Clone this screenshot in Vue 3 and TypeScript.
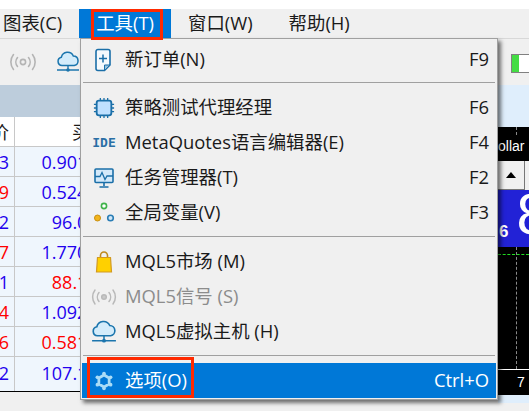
<template>
  <div class="page">
    <div class="top-strip"></div>

    <!-- Menu bar -->
    <div class="menubar">
      <span v-for="m in menus" :key="m" class="menubar-item" :class="{ active: m === '工具(T)' }">{{ m }}</span>
    </div>

    <!-- Toolbar -->
    <div class="toolbar">
      <svg class="tool-signal" width="28" height="20" viewBox="0 0 28 20">
        <g fill="none" stroke="#b4b4b4" stroke-width="1.6" stroke-linecap="round">
          <circle cx="14" cy="10" r="2.6" />
          <path d="M8.5 5.5a7 7 0 0 0 0 9M19.5 5.5a7 7 0 0 1 0 9" />
          <path d="M4.5 2.5a12 12 0 0 0 0 15M23.5 2.5a12 12 0 0 1 0 15" />
        </g>
      </svg>
      <svg class="tool-cloud" width="24" height="24" viewBox="0 0 24 24">
        <path d="M6 15.5a4.2 4.2 0 0 1-.6-8.3A6.3 6.3 0 0 1 17.3 6a4.8 4.8 0 0 1 .9 9.5z" fill="#d3ecfb" stroke="#1b75ad" stroke-width="1.5" />
        <path d="M1 20h22M12 15.5V20" stroke="#1b75ad" stroke-width="1.4" fill="none" />
        <circle cx="12" cy="20" r="1.8" fill="#1b75ad" />
      </svg>
    </div>

    <div class="content">
      <!-- Quotes table -->
      <div class="quotes">
        <div class="quotes-title"></div>
        <div class="quotes-row head">
          <div class="cell-a">价</div>
          <div class="cell-b center">买价</div>
        </div>
        <div v-for="(q, i) in quotes" :key="i" class="quotes-row">
          <div class="cell-a" :class="q.aUp ? 'blue' : 'red'">{{ q.a }}</div>
          <div class="cell-b" :class="q.bUp ? 'blue' : 'red'">{{ q.b }}</div>
        </div>
        <div class="quotes-foot"></div>
      </div>

      <!-- Chart edge -->
      <div class="chart">
        <div class="chart-title"></div>
        <div class="chart-head">ollar<span class="grid-line head-line"></span></div>
        <div class="chart-btn"><span class="arrow"></span></div>
        <div class="chart-price"><span class="small">6</span><span class="big">8</span></div>
        <div class="chart-body">
          <span class="grid-line body-line"></span>
          <div class="green-line"></div>
          <div class="axis-line"></div>
          <div class="axis-label">7</div>
        </div>
        <div class="chart-foot"></div>
      </div>
    </div>

    <div class="progress"><span class="progress-fill"></span></div>

    <!-- Dropdown -->
    <div class="menu">
      <template v-for="(item, i) in items" :key="i">
        <div v-if="item.sep" class="sep"></div>
        <div v-else class="row" :class="{ disabled: item.disabled, selected: item.selected }">
          <span class="row-icon">
            <svg v-if="item.icon === 'order'" width="24" height="26" viewBox="0 0 24 26">
              <path d="M6 2.5h10a2 2 0 0 1 2 2V18l-5.5 5.5H6a2 2 0 0 1-2-2v-17a2 2 0 0 1 2-2z" fill="#f6fafd" stroke="#1b6fa8" stroke-width="1.6" />
              <path d="M18 18h-5.5v5.5z" fill="#9cc4de" stroke="#1b6fa8" stroke-width="1" />
              <path d="M11 7.5v8M7 11.5h8" stroke="#1b6fa8" stroke-width="1.5" />
            </svg>
            <svg v-else-if="item.icon === 'chip'" width="22" height="22" viewBox="0 0 24 24">
              <path d="M8 1v22M12 1v22M16 1v22M1 8h22M1 12h22M1 16h22" stroke="#1b6fa8" stroke-width="1.4" />
              <rect x="4" y="4" width="16" height="16" rx="2.5" fill="#bfe0ff" stroke="#1b6fa8" stroke-width="2" />
            </svg>
            <span v-else-if="item.icon === 'ide'" class="ide">IDE</span>
            <svg v-else-if="item.icon === 'monitor'" width="24" height="24" viewBox="0 0 24 24">
              <rect x="3" y="3" width="18" height="13.5" rx="1" fill="#d3e9fa" stroke="#1b6fa8" stroke-width="1.6" />
              <path d="M3 10.5h5l2-4 3 7 2-3.5h6" fill="none" stroke="#1b6fa8" stroke-width="1.3" />
              <path d="M12 16.5V20M7.5 21h9" stroke="#1b6fa8" stroke-width="1.6" />
            </svg>
            <svg v-else-if="item.icon === 'vars'" width="24" height="24" viewBox="0 0 24 24">
              <circle cx="12" cy="5" r="2.6" fill="#fff" stroke="#3fb34a" stroke-width="1.6" />
              <circle cx="5.5" cy="17" r="3" fill="#f2b41b" stroke="#c98f10" stroke-width="1" />
              <circle cx="18.500" cy="17" r="2.8" fill="#cfe6f7" stroke="#2a7db5" stroke-width="1.6" />
            </svg>
            <svg v-else-if="item.icon === 'market'" width="24" height="24" viewBox="0 0 24 24">
              <path d="M8.5 9V5.5a3.5 3.5 0 0 1 7 0V9" fill="none" stroke="#c08a1e" stroke-width="1.6" />
              <path d="M5.5 7.5h13l1 14.5h-15z" fill="#ffd000" stroke="#d29a22" stroke-width="1.2" />
            </svg>
            <svg v-else-if="item.icon === 'signal'" width="28" height="20" viewBox="0 0 28 20">
              <g fill="none" stroke="#b9b9b9" stroke-width="1.5" stroke-linecap="round">
                <circle cx="14" cy="10" r="2.3" fill="#c9c9c9" />
                <path d="M9 5.5a7 7 0 0 0 0 9M19 5.5a7 7 0 0 1 0 9" />
                <path d="M5 3a11.5 11.5 0 0 0 0 14M23 3a11.5 11.5 0 0 1 0 14" />
              </g>
            </svg>
            <svg v-else-if="item.icon === 'cloud'" width="26" height="26" viewBox="0 0 24 24">
              <path d="M6 15.5a4.2 4.2 0 0 1-.6-8.3A6.3 6.3 0 0 1 17.3 6a4.8 4.8 0 0 1 .9 9.5z" fill="#d3ecfb" stroke="#1b75ad" stroke-width="1.5" />
              <path d="M1 20h22M12 15.5V20" stroke="#1b75ad" stroke-width="1.4" fill="none" />
              <circle cx="12" cy="20" r="1.8" fill="#1b75ad" />
            </svg>
            <svg v-else-if="item.icon === 'gear'" width="22" height="22" viewBox="0 0 24 24">
              <path d="M12 5.5l5.6 3.25v6.5L12 18.5l-5.6-3.25v-6.5z" fill="none" stroke="#a9dcf7" stroke-width="3" stroke-linejoin="round" />
              <circle cx="12" cy="3.8" r="2" fill="#a9dcf7" />
              <circle cx="12" cy="20.2" r="2" fill="#a9dcf7" />
              <circle cx="4.8" cy="8" r="2" fill="#a9dcf7" />
              <circle cx="19.2" cy="8" r="2" fill="#a9dcf7" />
              <circle cx="4.8" cy="16" r="2" fill="#a9dcf7" />
              <circle cx="19.2" cy="16" r="2" fill="#a9dcf7" />
            </svg>
          </span>
          <span class="row-label">{{ item.label }}</span>
          <span class="row-key">{{ item.key }}</span>
        </div>
      </template>
    </div>

    <!-- Red annotation boxes -->
    <div class="mark mark-tools"></div>
    <div class="mark mark-options"></div>
  </div>
</template>

<script setup lang="ts">
interface MenuItem {
  sep?: boolean
  icon?: string
  label?: string
  key?: string
  disabled?: boolean
  selected?: boolean
}

const menus = ['图表(C)', '工具(T)', '窗口(W)', '帮助(H)']

const quotes = [
  { a: '3', aUp: true, b: '0.90123', bUp: true },
  { a: '9', aUp: false, b: '0.52412', bUp: true },
  { a: '2', aUp: true, b: '96.012', bUp: true },
  { a: '7', aUp: false, b: '1.77012', bUp: true },
  { a: '1', aUp: true, b: '88.123', bUp: false },
  { a: '4', aUp: false, b: '1.09212', bUp: true },
  { a: '6', aUp: false, b: '0.58123', bUp: false },
  { a: '2', aUp: true, b: '107.123', bUp: true },
]

const items: MenuItem[] = [
  { icon: 'order', label: '新订单(N)', key: 'F9' },
  { sep: true },
  { icon: 'chip', label: '策略测试代理经理', key: 'F6' },
  { icon: 'ide', label: 'MetaQuotes语言编辑器(E)', key: 'F4' },
  { icon: 'monitor', label: '任务管理器(T)', key: 'F2' },
  { icon: 'vars', label: '全局变量(V)', key: 'F3' },
  { sep: true },
  { icon: 'market', label: 'MQL5市场 (M)' },
  { icon: 'signal', label: 'MQL5信号 (S)', disabled: true },
  { icon: 'cloud', label: 'MQL5虚拟主机 (H)' },
  { sep: true },
  { icon: 'gear', label: '选项(O)', key: 'Ctrl+O', selected: true },
]
</script>

<style>
html,
body {
  margin: 0;
  background: #f0f0f0;
}
</style>

<style scoped>
.page {
  position: relative;
  width: 529px;
  height: 411px;
  overflow: hidden;
  display: flex;
  flex-direction: column;
  background: #f0f0f0;
  color: #1a1a1a;
  font-family: "Open Sans", "Noto Sans CJK SC", sans-serif;
  font-size: 18.4px;
}

.top-strip {
  height: 9px;
  background: #fff;
  flex: none;
}

.menubar {
  height: 29px;
  flex: none;
  display: flex;
  margin-left: -14px;
  border-bottom: 1px solid #d8d8d8;
}

.menubar-item {
  padding: 0 17px;
  line-height: 27px;
  white-space: nowrap;
}

.menubar-item:last-child {
  margin-left: 2px;
}

.menubar-item.active {
  background: #0078d7;
  color: #fff;
}

.toolbar {
  height: 46px;
  flex: none;
  display: flex;
  align-items: center;
  padding-left: 9px;
  gap: 19px;
}

.content {
  flex: 1;
  display: flex;
  min-height: 0;
}

.quotes {
  width: 498px;
  flex: none;
  display: flex;
  flex-direction: column;
}

.quotes-title {
  height: 32px;
  flex: none;
  background: #bdcddc;
}

.quotes-row {
  height: 29px;
  flex: none;
  display: flex;
  background: #eff6fd;
  border-bottom: 1px solid #c8c8c8;
  font-size: 18px;
  line-height: 30px;
}

.quotes-row.head {
  background: #fff;
  color: #1a1a1a;
}

.quotes-row:nth-last-child(2) {
  height: 34px;
  line-height: 33px;
  border-bottom: 1px solid #000;
}

.cell-a {
  width: 15px;
  flex: none;
  box-sizing: border-box;
  padding-right: 5px;
  border-right: 1px solid #c8c8c8;
  display: flex;
  justify-content: flex-end;
  white-space: nowrap;
  overflow: hidden;
}

.cell-b {
  width: 93px;
  flex: none;
  text-align: right;
  white-space: nowrap;
}

.cell-b.center {
  width: 150px;
  text-align: center;
}

.blue {
  color: #2200ee;
}

.red {
  color: #f00;
}

.quotes-foot {
  flex: 1;
}

.chart {
  flex: 1;
  display: flex;
  flex-direction: column;
  min-width: 0;
}

.chart-title {
  height: 42px;
  flex: none;
  background: #dfeefc;
}

.chart-head {
  height: 34px;
  flex: none;
  position: relative;
  background: #000;
  color: #fff;
  font-family: "Liberation Sans", sans-serif;
  font-size: 14px;
  line-height: 38px;
  overflow: hidden;
}

.grid-line {
  position: absolute;
  left: 18px;
  border-left: 1px dashed #8a8a8a;
}

.head-line {
  top: 0;
  height: 8px;
}

.body-line {
  top: 0;
  height: 122px;
}

.chart-btn {
  height: 29px;
  width: 27px;
  flex: none;
  box-sizing: border-box;
  background: #f0f0f0;
  border-right: 1px solid #777;
  border-bottom: 1px solid #777;
  display: flex;
  align-items: center;
  justify-content: center;
}

.arrow {
  width: 0;
  height: 0;
  border-left: 5px solid transparent;
  border-right: 5px solid transparent;
  border-bottom: 6px solid #000;
}

.chart-price {
  height: 57px;
  flex: none;
  background: #2222d6;
  color: #fff;
  font-family: "Liberation Sans", sans-serif;
  display: flex;
  align-items: flex-end;
  overflow: hidden;
  padding-left: 1px;
}

.small {
  flex: none;
  font-size: 17px;
  font-weight: 700;
  line-height: 17px;
  margin-bottom: 7px;
}

.big {
  flex: none;
  font-size: 58px;
  line-height: 58px;
  margin-left: 8px;
  margin-bottom: 4px;
}

.chart-body {
  flex: none;
  height: 148px;
  background: #000;
  color: #fff;
  position: relative;
  font-family: "Liberation Sans", sans-serif;
}

.green-line {
  border-top: 1px dashed #22e022;
  margin-top: 7px;
}

.axis-line {
  border-top: 1px solid #fff;
  margin-top: 114px;
}

.axis-label {
  font-size: 14px;
  line-height: 18px;
  padding-left: 19px;
  margin-top: 3px;
}

.chart-foot {
  height: 8px;
  flex: none;
  background: #dfeefc;
}

.progress {
  position: absolute;
  left: 511px;
  top: 54px;
  width: 18px;
  height: 19px;
  box-sizing: border-box;
  border: 1px solid #808080;
  border-right: none;
  background: #fff;
}

.progress-fill {
  display: block;
  width: 7px;
  height: 100%;
  background: #44dd44;
}

.menu {
  position: absolute;
  left: 80px;
  top: 38px;
  width: 418px;
  box-sizing: border-box;
  padding: 3px 1px 1px;
  background: #f0f0f0;
  border: 1px solid #a0a0a0;
  box-shadow: 3px 3px 4px rgba(0, 0, 0, 0.55);
}

.row {
  height: 35px;
  display: flex;
  align-items: center;
  padding-right: 7px;
}

.row.selected {
  background: #0078d7;
  color: #fff;
}

.row.disabled {
  color: #8c8c8c;
}

.row-icon {
  width: 44px;
  margin-right: -1px;
  flex: none;
  display: flex;
  justify-content: center;
  align-items: center;
}

.row-label {
  flex: 1;
  white-space: nowrap;
  padding-bottom: 3px;
}

.row-key {
  white-space: nowrap;
  padding-bottom: 3px;
}

.ide {
  font-family: "DejaVu Sans Mono", monospace;
  font-size: 13px;
  font-weight: 700;
  color: #2a6fa5;
}

.sep {
  height: 1px;
  margin: 5px 1px 7px 1px;
  background: #a0a0a0;
}

.sep:nth-child(7),
.sep:nth-child(11) {
  margin-top: 6px;
}

.mark {
  position: absolute;
  border: 3px solid #ff2a00;
  box-sizing: border-box;
}

.mark-tools {
  left: 91px;
  top: 9px;
  width: 72px;
  height: 31px;
}

.mark-options {
  left: 87px;
  top: 357px;
  width: 107px;
  height: 41px;
}
</style>
